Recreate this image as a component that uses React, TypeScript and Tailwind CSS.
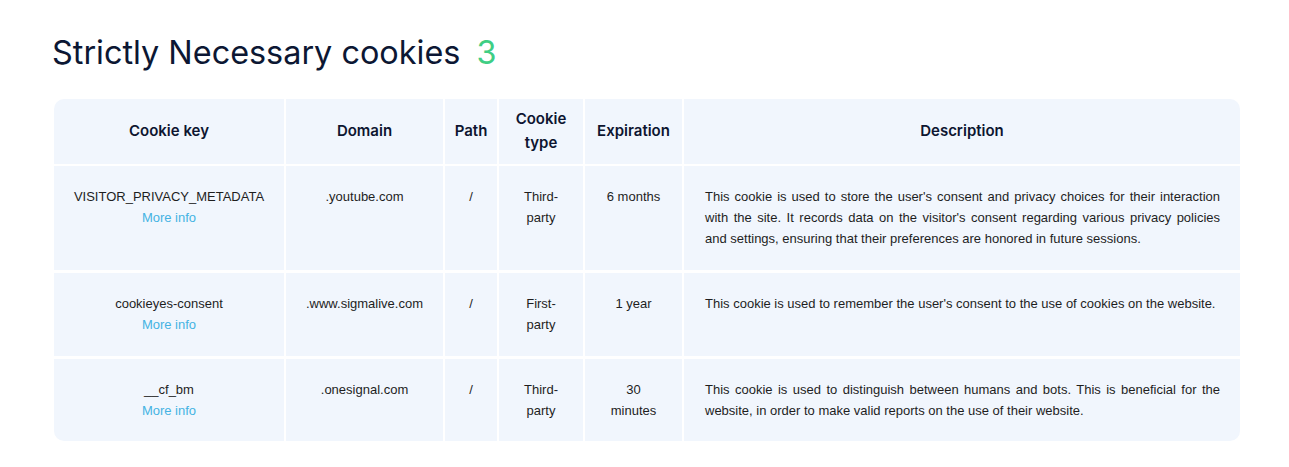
import React from "react";

const rows = [
  {
    key: "VISITOR_PRIVACY_METADATA",
    domain: ".youtube.com",
    path: "/",
    type: ["Third-", "party"],
    exp: ["6 months"],
    h: "h-[104px] mt-[2px]",
    desc: "This cookie is used to store the user's consent and privacy choices for their interaction with the site. It records data on the visitor's consent regarding various privacy policies and settings, ensuring that their preferences are honored in future sessions.",
  },
  {
    key: "cookieyes-consent",
    domain: ".www.sigmalive.com",
    path: "/",
    type: ["First-", "party"],
    exp: ["1 year"],
    h: "h-[83px] mt-[3px]",
    desc: "This cookie is used to remember the user's consent to the use of cookies on the website.",
  },
  {
    key: "__cf_bm",
    domain: ".onesignal.com",
    path: "/",
    type: ["Third-", "party"],
    exp: ["30", "minutes"],
    h: "h-[82px] mt-[3px]",
    desc: "This cookie is used to distinguish between humans and bots. This is beneficial for the website, in order to make valid reports on the use of their website.",
  },
];

const font = " text-[13px] leading-[21px] text-[#1e1e1e] font-['Liberation_Sans',Arial,sans-serif]";
const body = "bg-[#f1f6fd] px-2 pt-5 text-center" + font;
const head = "bg-[#f1f6fd] flex items-center justify-center text-center text-[15px] leading-[24px] font-semibold text-[#0d1530] font-['Inter',sans-serif]";

export default function App() {
  return (
    <div className="w-[1289px] h-[467px] bg-white pl-[54px] pt-[30px]">
      <h2 className="font-['Inter',sans-serif] text-[32.4px] leading-[44px] text-[#0c1733] font-normal -ml-[2px] pt-[1px] flex items-baseline">
        <span>Strictly Necessary cookies</span>
        <span className="ml-[16px] text-[#3fce84]">3</span>
      </h2>
      <div className="mt-[24px] w-[1186px] rounded-[10px] overflow-hidden grid grid-cols-[230px_157px_52px_84px_97px_556px] gap-x-[2px] bg-white">
        <div className={head + " h-[65px] pb-[1px]"}>Cookie key</div>
        <div className={head + " pb-[1px]"}>Domain</div>
        <div className={head + " pb-[1px]"}>Path</div>
        <div className={head + " pb-[1px]"}>Cookie<br />type</div>
        <div className={head + " pb-[1px]"}>Expiration</div>
        <div className={head + " pb-[1px]"}>Description</div>
        {rows.map((r) => (
          <React.Fragment key={r.key}>
            <div className={body + " " + r.h}>
              <div>{r.key}</div>
              <div className="text-[#45b3e3]">More info</div>
            </div>
            <div className={body + " " + r.h}>{r.domain}</div>
            <div className={body + " " + r.h}>{r.path}</div>
            <div className={body + " " + r.h}>
              {r.type.map((t) => (
                <div key={t}>{t}</div>
              ))}
            </div>
            <div className={body + " " + r.h}>
              {r.exp.map((t) => (
                <div key={t}>{t}</div>
              ))}
            </div>
            <div className={"bg-[#f1f6fd] pt-5 pl-[21px] pr-[20px] text-justify " + font + " " + r.h}>
              {r.desc}
            </div>
          </React.Fragment>
        ))}
      </div>
    </div>
  );
}
